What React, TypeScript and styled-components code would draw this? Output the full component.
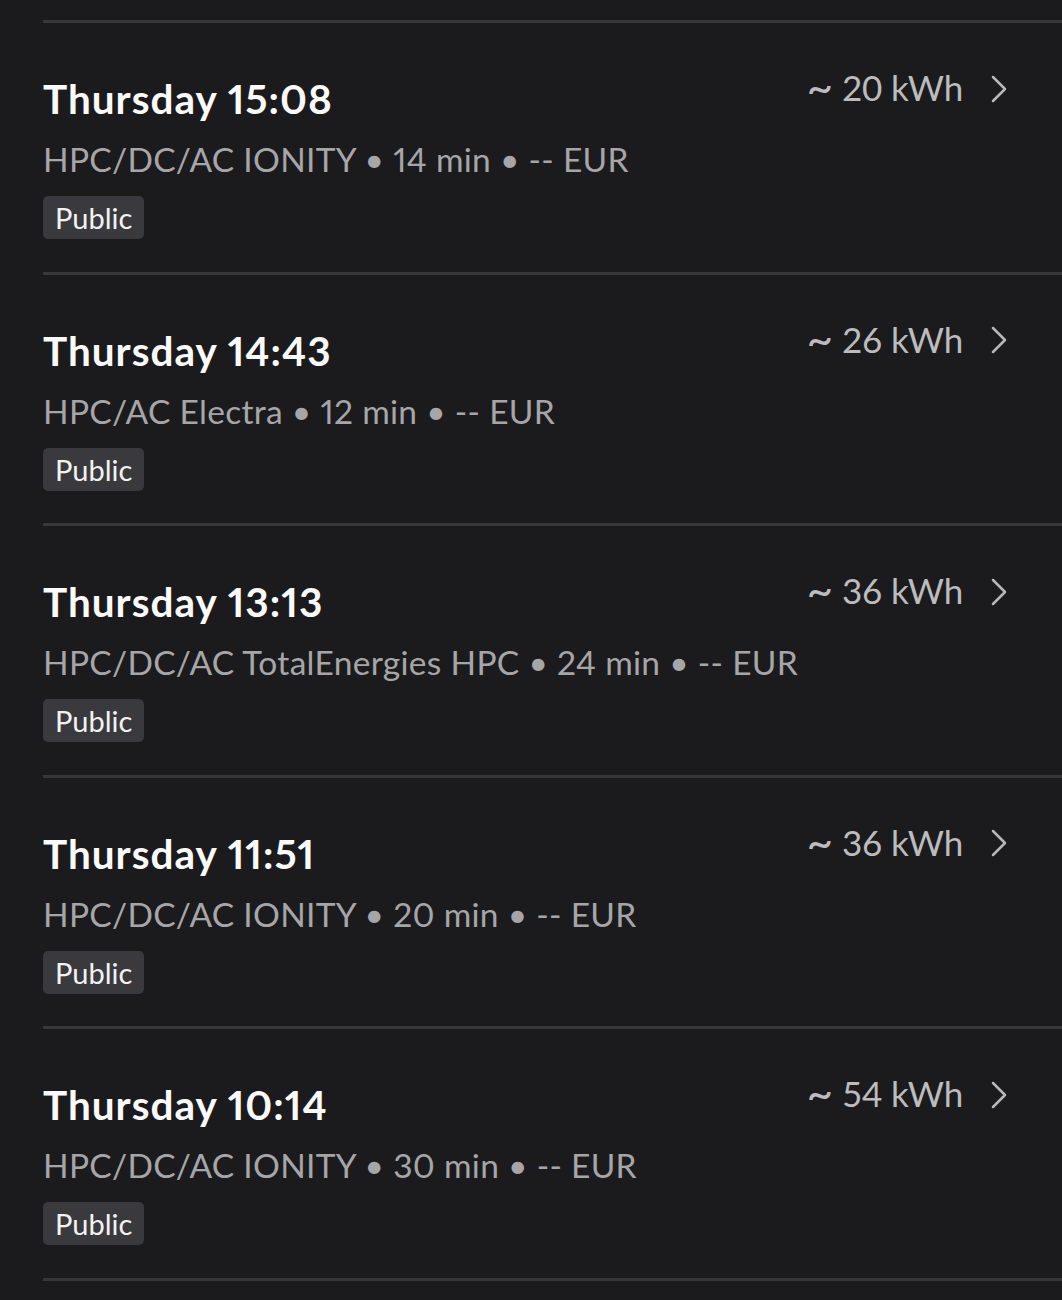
import React from "react";
import styled, { createGlobalStyle } from "styled-components";

const GlobalStyle = createGlobalStyle`
  html, body {
    margin: 0;
    padding: 0;
    background: #1b1b1e;
  }
  body {
    font-family: Lato, "Liberation Sans", sans-serif;
    -webkit-font-smoothing: antialiased;
  }
`;

interface Session {
  day: string;
  time: string;
  provider: string;
  minutes: number;
  cost: string;
  energy: number;
  access: string;
}

const sessions: Session[] = [
  { day: "Thursday", time: "15:08", provider: "HPC/DC/AC IONITY", minutes: 14, cost: "--", energy: 20, access: "Public" },
  { day: "Thursday", time: "14:43", provider: "HPC/AC Electra", minutes: 12, cost: "--", energy: 26, access: "Public" },
  { day: "Thursday", time: "13:13", provider: "HPC/DC/AC TotalEnergies HPC", minutes: 24, cost: "--", energy: 36, access: "Public" },
  { day: "Thursday", time: "11:51", provider: "HPC/DC/AC IONITY", minutes: 20, cost: "--", energy: 36, access: "Public" },
  { day: "Thursday", time: "10:14", provider: "HPC/DC/AC IONITY", minutes: 30, cost: "--", energy: 54, access: "Public" },
];

const Page = styled.div`
  min-height: 1300px;
  padding: 20px 0 0 43px;
  box-sizing: border-box;
  background: #1b1b1e;
`;

const List = styled.ul`
  list-style: none;
  margin: 0;
  padding: 0;
  border-bottom: 3px solid #37373a;
`;

const Row = styled.li`
  display: flex;
  justify-content: space-between;
  align-items: flex-start;
  border-top: 3px solid #37373a;
  padding: 43px 55px 32.4px 0;
  cursor: pointer;
`;

const Main = styled.div`
  display: flex;
  flex-direction: column;
  align-items: flex-start;
  padding-top: 9px;
`;

const Title = styled.div`
  font-size: 40.5px;
  line-height: 1.2;
  font-weight: 700;
  letter-spacing: 1px;
  font-variant-numeric: proportional-nums;
  color: #fafafa;
`;

const Meta = styled.div`
  margin-top: 15.4px;
  font-size: 33.5px;
  line-height: 1.2;
  letter-spacing: 0.3px;
  font-variant-numeric: proportional-nums;
  color: #a6a6a9;
`;

const Badge = styled.span`
  display: inline-flex;
  align-items: center;
  height: 43px;
  margin-top: 17px;
  padding: 0 12px;
  border-radius: 5px;
  background: #3a3a3e;
  color: #f2f2f2;
  font-size: 29px;
`;

const Side = styled.div`
  display: flex;
  align-items: center;
  gap: 28px;
`;

const Energy = styled.span`
  font-size: 35px;
  line-height: 1.23;
  letter-spacing: -0.2px;
  color: #bcbcbe;
`;

const Tilde = styled.span`
  position: relative;
  top: 3px;
  font-size: 46px;
  line-height: 0;
  margin-right: 9px;
`;

const Chevron = () => (
  <svg width="16" height="28" viewBox="0 0 16 28" style={{ marginTop: 2 }}>
    <polyline points="2,2 14,14 2,26" fill="none" stroke="#b8b8ba" strokeWidth="2.5" strokeLinecap="round" strokeLinejoin="round" />
  </svg>
);

const SessionRow = ({ s }: { s: Session }) => (
  <Row>
    <Main>
      <Title>
        {s.day} {s.time}
      </Title>
      <Meta>
        {s.provider} • {s.minutes} min • {s.cost} EUR
      </Meta>
      <Badge>{s.access}</Badge>
    </Main>
    <Side>
      <Energy>
        <Tilde>~</Tilde>
        {s.energy} kWh
      </Energy>
      <Chevron />
    </Side>
  </Row>
);

export default function App() {
  return (
    <Page>
      <GlobalStyle />
      <List>
        {sessions.map((s, i) => (
          <SessionRow key={i} s={s} />
        ))}
      </List>
    </Page>
  );
}
